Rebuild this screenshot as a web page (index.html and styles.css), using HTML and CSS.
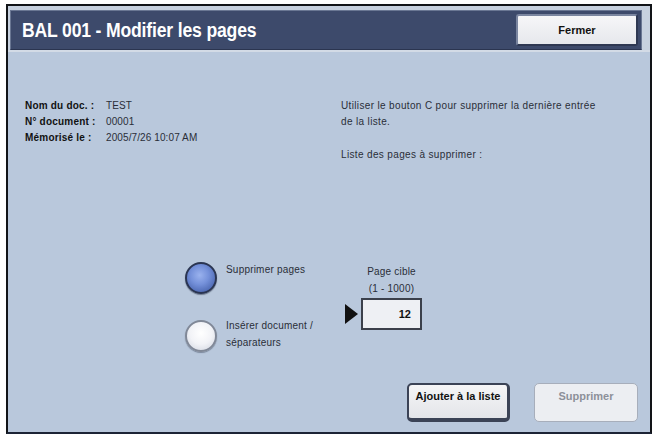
FILE: index.html
```html
<!DOCTYPE html>
<html lang="fr">
<head>
<meta charset="utf-8">
<title>BAL 001 - Modifier les pages</title>
<link rel="stylesheet" href="styles.css">
</head>
<body>
<div class="frame">
  <div class="head-wrap">
    <div class="head-bar">
      <h1 class="title">BAL 001 - Modifier les pages</h1>
      <button class="btn-close">Fermer</button>
    </div>
  </div>
  <div class="content">
    <div class="info">
      <div class="doc">
        <div class="row"><span class="lbl">Nom du doc. :</span><span class="val">TEST</span></div>
        <div class="row"><span class="lbl">N° document :</span><span class="val">00001</span></div>
        <div class="row"><span class="lbl">Mémorisé le :</span><span class="val">2005/7/26 10:07 AM</span></div>
      </div>
      <div class="hint">
        <p class="hint-text">Utiliser le bouton C pour supprimer la dernière entrée<br>de la liste.</p>
        <p class="hint-list">Liste des pages à supprimer :</p>
      </div>
    </div>
    <div class="mid">
      <div class="radios">
        <div class="radio-item">
          <span class="radio on"></span>
          <span class="radio-lbl">Supprimer pages</span>
        </div>
        <div class="radio-item second">
          <span class="radio off"></span>
          <span class="radio-lbl">Insérer document /<br>séparateurs</span>
        </div>
      </div>
      <div class="target">
        <div class="target-lbl">Page cible<br>(1 - 1000)</div>
        <div class="target-row">
          <span class="arrow"></span>
          <span class="field">12</span>
        </div>
      </div>
    </div>
    <div class="actions">
      <button class="btn btn-add">Ajouter à la liste</button>
      <button class="btn btn-del">Supprimer</button>
    </div>
  </div>
</div>
</body>
</html>
```

FILE: styles.css
```css
* { box-sizing: border-box; }
html, body { margin: 0; padding: 0; background: #ffffff; }
body {
  width: 657px;
  height: 440px;
  padding: 4px 0 0 6px;
  font-family: "Liberation Sans", Arial, sans-serif;
  font-size: 10px;
  color: #1b1f2a;
}
.frame {
  width: 646px;
  height: 430px;
  border: 2px solid #121418;
  border-bottom-color: #1c2436;
  background: #b9c8dc;
  display: flex;
  flex-direction: column;
}
.head-wrap {
  background: #c7d1df;
  padding: 4px 8px 0 2px;
  border-bottom: 2px solid #d3dbe6;
}
.head-bar {
  height: 40px;
  background: #3d4a6b;
  border: 1px solid #6a7793;
  border-bottom-color: #2b3550;
  display: flex;
  align-items: center;
  justify-content: space-between;
  padding: 0 3px 0 11px;
}
.title {
  margin: 0;
  font-size: 20px;
  font-weight: bold;
  color: #ffffff;
  white-space: nowrap;
  transform: scaleX(0.88);
  transform-origin: left center;
  letter-spacing: -0.2px;
}
.btn-close {
  width: 122px;
  height: 32px;
  font-family: "Liberation Sans", Arial, sans-serif;
  font-size: 11px;
  font-weight: bold;
  color: #111;
  background: linear-gradient(#f6f6f8, #e6e8ec);
  border: 2px solid #2e3852;
  border-top-color: #7b86a0;
  border-left-color: #7b86a0;
  border-radius: 3px;
  padding: 0;
}
.content {
  flex: 1;
  display: flex;
  flex-direction: column;
}
.info {
  display: flex;
  margin-top: 46px;
  height: 65px;
}
.doc {
  width: 333px;
  padding-left: 17px;
}
.row {
  display: flex;
  line-height: 16px;
  height: 16px;
}
.lbl {
  width: 81px;
  font-weight: bold;
  color: #111;
  letter-spacing: 0.2px;
}
.val { color: #2a2e38; letter-spacing: 0.1px; }
.hint p { margin: 0; line-height: 16px; color: #2a2e38; letter-spacing: 0.35px; }
.hint-list { margin-top: 17px !important; }
.mid {
  display: flex;
  align-items: flex-start;
  margin-top: 99px;
  margin-left: 177px;
  height: 90px;
}
.radios {
  width: 160px;
  display: flex;
  flex-direction: column;
  gap: 26px;
}
.radio-item {
  display: flex;
  align-items: flex-start;
}
.radio {
  width: 32px;
  height: 32px;
  border-radius: 50%;
  flex: none;
}
.radio.on {
  background: radial-gradient(circle at 45% 40%, #9ab2ee 0%, #7591da 40%, #4d69b3 78%, #35497f 100%);
  border: 2px solid #2a3552;
  box-shadow: 0 1px 1px rgba(30, 40, 60, 0.5);
}
.radio.off {
  background: radial-gradient(circle at 50% 40%, #ffffff 0%, #f2f3f7 50%, #d9dde6 85%, #c3c8d3 100%);
  border: 2px solid #808897;
  box-shadow: 0 1px 1px rgba(30, 40, 60, 0.4);
}
.radio-lbl {
  margin-left: 9px;
  line-height: 16px;
  color: #2a2e38;
  letter-spacing: 0.2px;
}
.second .radio-lbl {
  line-height: 17px;
  margin-top: -3px;
}
.target {
  width: 77px;
  margin-top: 1px;
}
.target-lbl {
  padding-left: 16px;
  text-align: center;
  line-height: 17px;
  color: #2a2e38;
  letter-spacing: 0.2px;
}
.target-row {
  display: flex;
  align-items: center;
  margin-top: 1px;
}
.arrow {
  width: 0;
  height: 0;
  border-left: 13px solid #111;
  border-top: 10px solid transparent;
  border-bottom: 10px solid transparent;
  margin-right: 3px;
}
.field {
  width: 61px;
  height: 32px;
  background: #eef0f4;
  border: 2px solid #3b404b;
  font-size: 11px;
  font-weight: bold;
  color: #111;
  text-align: right;
  padding-right: 9px;
  line-height: 28px;
}
.actions {
  display: flex;
  justify-content: flex-end;
  gap: 24px;
  margin-top: 31px;
  padding-right: 12px;
}
.btn {
  height: 39px;
  font-family: "Liberation Sans", Arial, sans-serif;
  font-size: 11px;
  font-weight: bold;
  border-radius: 5px;
  padding: 5px 0 0 0;
  display: flex;
  justify-content: center;
  align-items: flex-start;
}
.btn-add {
  width: 103px;
  color: #111;
  background: linear-gradient(#f5f5f7, #e3e5e9);
  border: 2px solid #3b4356;
  border-bottom-width: 4px;
  border-right-width: 3px;
}
.btn-del {
  width: 104px;
  color: #8c9099;
  background: #eceef2;
  border: 1px solid #a7aebb;
  padding-top: 6px;
}
```
